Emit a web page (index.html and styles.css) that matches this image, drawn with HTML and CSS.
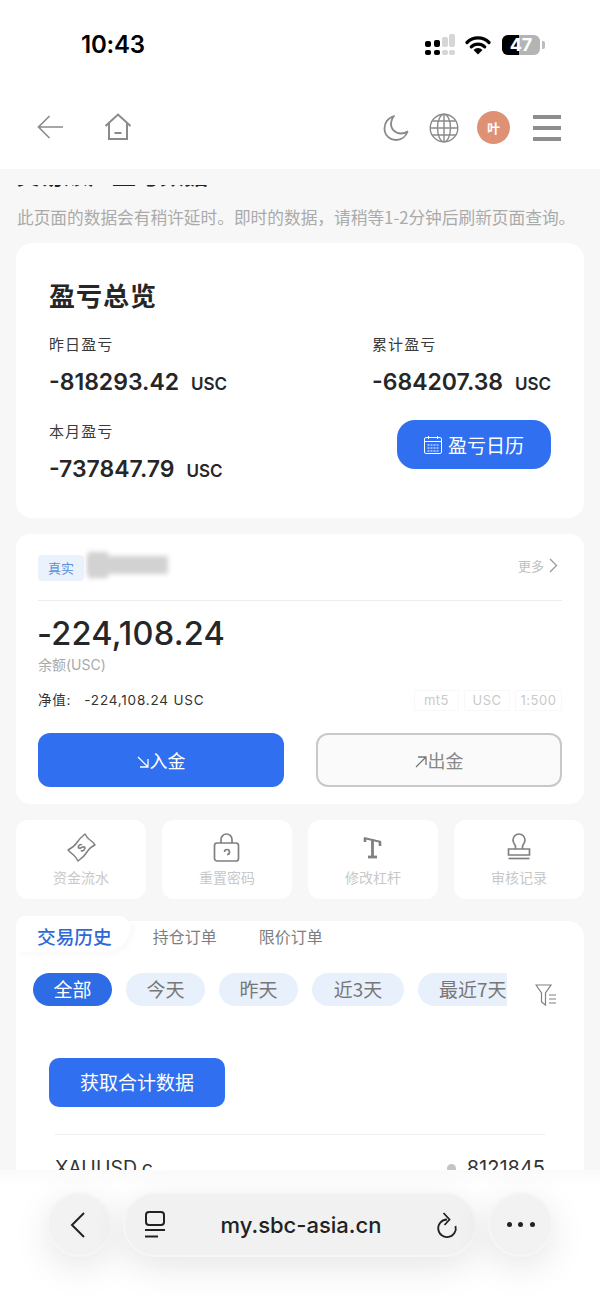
FILE: index.html
```html
<!DOCTYPE html>
<html lang="zh-CN">
<head>
<meta charset="utf-8">
<title>盈亏总览</title>
<link rel="stylesheet" href="styles.css">
</head>
<body>
<div class="phone">
  <header class="top">
    <div class="status">
      <span class="clock">10:43</span>
      <div class="status-icons">
        <svg class="signal" width="30" height="21" viewBox="0 0 30 21"><g fill="#000"><rect x="0" y="7" width="6" height="6" rx="2"/><rect x="0" y="16" width="6" height="5" rx="2"/><rect x="9" y="6" width="6" height="7" rx="2"/><rect x="9" y="16" width="6" height="5" rx="2"/></g><g fill="#d6d6d6"><rect x="17" y="3" width="6" height="10" rx="2"/><rect x="17" y="16" width="6" height="5" rx="2"/><rect x="24" y="0" width="6" height="13" rx="2"/><rect x="24" y="16" width="6" height="5" rx="2"/></g></svg>
        <svg class="wifi" width="26" height="20" viewBox="0 0 26 20"><path d="M2 7.500a15.500 15.500 0 0 1 22 0M6.300 11.800a9.500 9.500 0 0 1 13.400 0" fill="none" stroke="#000" stroke-width="3.200" stroke-linecap="round"/><path d="M13 19.500l-4.500-4.500a6.300 6.300 0 0 1 9 0z" fill="#000"/></svg>
        <div class="battery"><div class="battery-fill"></div><span class="battery-num">47</span></div>
        <i class="battery-cap"></i>
      </div>
    </div>
    <nav class="nav">
      <div class="nav-left">
        <svg width="26" height="26" viewBox="0 0 26 26"><path d="M12.500 2 1.500 13l11 11M1.500 13H26" fill="none" stroke="#8a8a8a" stroke-width="1.600"/></svg>
        <svg width="28" height="28" viewBox="0 0 28 28"><path d="M1.500 13 14 1.500 26.500 13M5 10.500V26h18V10.500M10.500 20h7" fill="none" stroke="#8a8a8a" stroke-width="2"/></svg>
      </div>
      <div class="nav-right">
        <svg class="moon" width="26" height="28" viewBox="0 0 26 28"><path d="M11 2C4 4 1.500 10 1.500 14.500 1.500 21 6.500 26 13 26c5.500 0 10-3.500 11.500-8.500-2 1.500-4.500 2-6.500 2C12 19.500 7.500 14.500 8 9c.2-2.500 1.200-5 3-7z" fill="none" stroke="#8a8a8a" stroke-width="1.800" stroke-linejoin="round"/></svg>
        <svg class="globe" width="30" height="30" viewBox="0 0 30 30"><g fill="none" stroke="#8a8a8a" stroke-width="1.400"><circle cx="15" cy="15" r="13.800"/><ellipse cx="15" cy="15" rx="6.500" ry="13.800"/><path d="M15 1.500v27M1.500 15h27M3.500 8h23M3.500 22h23"/></g></svg>
        <span class="avatar">叶</span>
        <div class="burger"><i></i><i></i><i></i></div>
      </div>
    </nav>
  </header>

  <main class="content">
    <div class="title-clip"><h1 class="page-title">交易账户盈亏数据</h1></div>
    <p class="notice">此页面的数据会有稍许延时。即时的数据，请稍等1-2分钟后刷新页面查询。</p>

    <section class="card summary">
      <h2 class="summary-title">盈亏总览</h2>
      <div class="summary-grid">
        <div class="stat">
          <div class="stat-label">昨日盈亏</div>
          <div class="stat-value">-818293.42<small>USC</small></div>
        </div>
        <div class="stat">
          <div class="stat-label">累计盈亏</div>
          <div class="stat-value">-684207.38<small>USC</small></div>
        </div>
        <div class="stat">
          <div class="stat-label">本月盈亏</div>
          <div class="stat-value">-737847.79<small>USC</small></div>
        </div>
        <div class="calendar-btn">
          <svg width="18" height="18" viewBox="0 0 18 18"><g fill="none" stroke="#fff" stroke-width="1"><rect x=".5" y="1.500" width="17" height="16" rx="1.500"/><path d="M.5 5.500h17M4.500 0v3M13.500 0v3"/><path d="M3.500 9h11M3.500 12h11M3.500 15h11" stroke-dasharray="2 1"/></g></svg>
          <span>盈亏日历</span>
        </div>
      </div>
    </section>

    <section class="card account">
      <div class="account-head">
        <div class="account-id">
          <span class="tag">真实</span>
          <div class="blur-name"><i class="blur-a"></i><i class="blur-b"></i></div>
        </div>
        <div class="more">更多
          <svg width="9" height="15" viewBox="0 0 9 15"><path d="M1 1l6.500 6.500L1 14" fill="none" stroke="#999" stroke-width="1.300"/></svg>
        </div>
      </div>
      <div class="balance">-224,108.24</div>
      <div class="balance-label">余额(USC)</div>
      <div class="equity-row">
        <div class="equity"><span class="equity-key">净值:</span>-224,108.24 USC</div>
        <div class="chips"><span class="chip chip-mt">mt5</span><span class="chip chip-cur">USC</span><span class="chip chip-lev">1:500</span></div>
      </div>
      <div class="actions">
        <div class="btn-deposit"><svg width="12" height="12" viewBox="0 0 12 12"><path d="M1 1l10 10M11 3v8H3" fill="none" stroke="#fff" stroke-width="1.300"/></svg>入金</div>
        <div class="btn-withdraw"><svg width="12" height="12" viewBox="0 0 12 12"><path d="M1 11 11 1M3 1h8v8" fill="none" stroke="#777" stroke-width="1.300"/></svg>出金</div>
      </div>
    </section>

    <section class="shortcuts">
      <div class="shortcut">
        <svg width="32" height="32" viewBox="0 0 32 32"><g fill="none" stroke="#808080" stroke-width="1.500" stroke-linejoin="round"><path d="M3 18Q9 15 12 10.500T20 2Q22 6 25 8T30 13Q25 15 22 20T13 29Q11 25 8.500 23T3 18z"/></g><text class="dollar" x="16.500" y="19.500" text-anchor="middle" transform="rotate(-45 16.500 15.500)">S</text></svg>
        <span>资金流水</span>
      </div>
      <div class="shortcut">
        <svg width="32" height="32" viewBox="0 0 32 32"><g fill="none" stroke="#808080" stroke-width="1.700"><rect x="3.500" y="11" width="24" height="18" rx="2.500"/><path d="M10 11V7.500a5.500 5.500 0 0 1 11 0V11"/><path d="M13.500 20a2.500 2.500 0 1 1 2.500 2.500"/></g></svg>
        <span>重置密码</span>
      </div>
      <div class="shortcut">
        <svg width="32" height="32" viewBox="0 0 32 32"><g fill="none" stroke="#808080"><path d="M7 6l17 4" stroke-width="1.800"/><path d="M15.500 7v17" stroke-width="2.800"/><path d="M11 25h9" stroke-width="2.800"/><path d="M8 6v4M23 10v4" stroke-width="2.600"/></g></svg>
        <span>修改杠杆</span>
      </div>
      <div class="shortcut">
        <svg width="32" height="32" viewBox="0 0 32 32"><g fill="none" stroke="#808080" stroke-width="1.700"><path d="M12.500 17v-2.500c0-2-2.500-2.800-2.500-6.500a6 6 0 0 1 12 0c0 3.700-2.500 4.500-2.500 6.500V17"/><path d="M5.500 23v-6h21v6z"/><path d="M5.500 26.500h21"/></g></svg>
        <span>审核记录</span>
      </div>
    </section>

    <section class="card orders">
      <div class="tabs">
        <span class="tab tab-active">交易历史</span>
        <span class="tab tab-hold">持仓订单</span>
        <span class="tab tab-limit">限价订单</span>
      </div>
      <div class="filters">
        <div class="pills">
          <span class="pill pill-on">全部</span>
          <span class="pill">今天</span>
          <span class="pill">昨天</span>
          <span class="pill pill-3">近3天</span>
          <span class="pill pill-7">最近7天</span>
        </div>
        <svg class="filter-icon" width="22" height="23" viewBox="0 0 22 23"><path d="M1 1h15l-5.500 8v12l-4-3V9z M14 11h7M14 15h7M14 19h7" fill="none" stroke="#808080" stroke-width="1.200"/></svg>
      </div>
      <div class="fetch-btn">获取合计数据</div>
      <div class="order-row">
        <span class="symbol">XAUUSD.c</span>
        <span class="ticket"><i></i>8121845</span>
      </div>
    </section>
  </main>

  <footer class="browser">
    <div class="round-btn">
      <svg class="back-chevron" width="16" height="28" viewBox="0 0 16 28"><path d="M14 2 2 14l12 12" fill="none" stroke="#222" stroke-width="2"/></svg>
    </div>
    <div class="url-bar">
      <svg width="22" height="27" viewBox="0 0 22 27"><g fill="none" stroke="#222" stroke-width="2"><rect x="2" y="1" width="18" height="13" rx="3"/><path d="M1 19h20"/><path d="M1 25.500h13"/></g></svg>
      <span class="url">my.sbc-asia.cn</span>
      <svg width="22" height="28" viewBox="0 0 22 28"><g fill="none" stroke="#222" stroke-width="1.800"><path d="M11 8.500A8.800 8.800 0 1 0 19.500 15"/><path d="M7.500 2l6 6.500-5 5.500"/></g></svg>
    </div>
    <div class="round-btn">
      <div class="dots"><i></i><i></i><i></i></div>
    </div>
  </footer>
</div>
</body>
</html>
```

FILE: styles.css
```css
* { box-sizing: border-box; }
html, body { margin: 0; padding: 0; }
body {
  width: 600px;
  height: 1304px;
  overflow: hidden;
  font-family: "Inter", "Noto Sans CJK SC", sans-serif;
  color: #262626;
  background: #fff;
}
.phone { width: 600px; height: 1304px; display: flex; flex-direction: column; overflow: hidden; }

.top { height: 169px; flex: none; background: #fff; }
.status { height: 86px; display: flex; justify-content: space-between; align-items: center; padding: 3px 55px 0 81px; }
.clock { font: 600 24px/30px "Inter", sans-serif; color: #000; letter-spacing: -0.2px; }
.status-icons { display: flex; align-items: center; }
.signal { margin-right: 10px; }
.wifi { margin-right: 11px; }
.battery { position: relative; width: 38px; height: 20px; border-radius: 6px; background: #b4b4b4; overflow: hidden; }
.battery-fill { width: 17px; height: 20px; background: #000; }
.battery-num { position: absolute; inset: 0; text-align: center; font: 700 18px/20px "Inter", sans-serif; color: #fff; }
.battery-cap { width: 3px; height: 8px; margin-left: 2px; border-radius: 0 2px 2px 0; background: #bcbcbc; }

.nav { height: 83px; display: flex; justify-content: space-between; align-items: flex-start; padding: 25px 39px 0 37px; }
.nav-left { display: flex; align-items: center; gap: 41px; padding-top: 2px; }
.nav-right { display: flex; align-items: center; }
.moon { margin-right: 20px; }
.globe { margin-right: 18px; }
.avatar { width: 33px; height: 33px; border-radius: 50%; background: #df9176; color: #fff; font: 700 13px/33px "Noto Sans CJK SC", sans-serif; text-align: center; margin-right: 23px; }
.burger { width: 28px; display: flex; flex-direction: column; gap: 7px; }
.burger i { display: block; height: 4px; background: #8d8d8d; }

.content { flex: 1; min-height: 0; background: #f7f7f7; padding: 0 16px; overflow: hidden; }
.title-clip { height: 3px; margin-top: 16px; overflow: hidden; }
.page-title { margin: -26px 0 0; font: 700 24px/30px "Noto Sans CJK SC", sans-serif; color: #222; white-space: nowrap; }
.notice { margin: 19px 0 16px 1px; font: 400 16.700px/20px "Noto Sans CJK SC", sans-serif; color: #aaa; white-space: nowrap; }

.card { background: #fff; border-radius: 16px; }
.summary { height: 275px; padding: 33px 33px 0; margin-bottom: 16px; }
.summary-title { margin: 0 0 19px; font: 700 26px/38px "Noto Sans CJK SC", sans-serif; color: #262626; letter-spacing: 1px; }
.summary-grid { display: grid; grid-template-columns: 323px 1fr; row-gap: 23px; }
.stat-label { font: 400 15px/22px "Noto Sans CJK SC", sans-serif; color: #3a3a3a; letter-spacing: 1.100px; }
.stat-value { margin-top: 14px; font: 600 23px/26px "Inter", sans-serif; color: #262626; white-space: nowrap; }
.stat-value small { margin-left: 12px; font: 600 17px/26px "Inter", sans-serif; }
.calendar-btn { justify-self: end; width: 154px; height: 49px; border-radius: 18px; background: #2f6ff0; color: #fff; display: flex; align-items: center; justify-content: center; gap: 6px; font: 400 19px/24px "Noto Sans CJK SC", sans-serif; }

.account { height: 270px; padding: 0 22px; margin-bottom: 16px; border-radius: 14px; }
.account-head { height: 67px; display: flex; justify-content: space-between; align-items: flex-start; padding-top: 21px; border-bottom: 1px solid #ececec; }
.account-id { display: flex; }
.tag { width: 46px; height: 26px; border-radius: 4px; background: #eaf2fc; color: #5b8fdc; font: 400 13px/25px "Noto Sans CJK SC", sans-serif; text-align: center; }
.blur-name { position: relative; width: 86px; height: 26px; margin-top: -3px; }
.blur-name i { position: absolute; background: #d2d2d2; filter: blur(2.500px); }
.blur-a { left: 4px; top: 0; width: 20px; height: 26px; }
.blur-b { left: 4px; top: 4px; width: 80px; height: 18px; }
.more { display: flex; align-items: flex-start; gap: 5px; padding: 2px 4px 0 0; font: 400 13px/18px "Noto Sans CJK SC", sans-serif; color: #c0c0c0; }
.more svg { margin-top: 1px; }
.balance { margin: 12px 0 0 -1px; font: 500 32.500px/42px "Inter", sans-serif; color: #262626; letter-spacing: .2px; }
.balance-label { margin-top: 1px; font: 400 14px/18px "Inter", "Noto Sans CJK SC", sans-serif; color: #aaa; }
.equity-row { display: flex; justify-content: space-between; align-items: center; margin-top: 15px; height: 22px; }
.equity { font: 400 13.500px/22px "Inter", "Noto Sans CJK SC", sans-serif; color: #333; letter-spacing: .8px; }
.equity-key { margin-right: 13px; }
.chips { display: flex; gap: 5px; }
.chip { height: 21px; border: 1px solid #f8f8f8; color: #cacaca; font: 400 13px/19px "Inter", sans-serif; text-align: center; letter-spacing: .5px; }
.chip-mt { width: 45px; }
.chip-cur { width: 46px; }
.chip-lev { width: 47px; }
.actions { display: flex; justify-content: space-between; margin-top: 22px; }
.btn-deposit, .btn-withdraw { width: 246px; height: 54px; border-radius: 12px; display: flex; align-items: center; justify-content: center; gap: 1px; font: 400 18px/24px "Noto Sans CJK SC", sans-serif; }
.btn-deposit { background: #2f6ff0; color: #fff; }
.btn-withdraw { background: #fafafa; border: 2px solid #c8c8c8; color: #888; }
.btn-deposit svg, .btn-withdraw svg { margin-top: 4px; }

.shortcuts { display: flex; justify-content: space-between; margin-bottom: 22px; }
.shortcut { width: 130px; height: 79px; background: #fff; border-radius: 12px; display: flex; flex-direction: column; align-items: center; padding-top: 12px; gap: 4px; font: 400 14px/18px "Noto Sans CJK SC", sans-serif; color: #c8c8c8; }
.shortcut svg { flex: none; }
.dollar { font: 700 11px "Inter", sans-serif; fill: #808080; }

.orders { height: 400px; position: relative; padding: 0; }
.tabs { height: 30px; display: flex; align-items: center; }
.tab { font: 400 16px/30px "Noto Sans CJK SC", sans-serif; color: #7e7e7e; }
.tab-active { position: relative; z-index: 0; font-size: 18.700px; font-weight: 500; color: #2e69d6; margin-left: 21px; }
.tab-active::after { content: ""; position: absolute; left: -21px; right: -18px; top: -5px; height: 36px; border-radius: 14px 18px 40px 0; background: #fff; box-shadow: 4px 3px 6px rgba(0,0,0,.025); z-index: -1; }
.tab-hold { margin-left: 41px; }
.tab-limit { margin-left: 42px; }
.filters { display: flex; align-items: flex-start; margin-top: 22px; padding-left: 17px; }
.pills { width: 474px; display: flex; gap: 14px; overflow: hidden; }
.pill { flex: none; width: 79px; height: 33px; border-radius: 17px; background: #e8f0fb; color: #777; font: 400 19px/31px "Noto Sans CJK SC", sans-serif; text-align: center; }
.pill-on { background: #2e6ce6; color: #fff; }
.pill-3 { width: 92px; }
.pill-7 { width: 110px; padding-left: 21px; text-align: left; white-space: nowrap; }
.filter-icon { margin: 11px 0 0 28px; }
.fetch-btn { width: 176px; height: 49px; margin: 51px 0 0 33px; border-radius: 10px; background: #2f6ff0; color: #fff; font: 400 19px/47px "Noto Sans CJK SC", sans-serif; text-align: center; }
.order-row { display: flex; justify-content: space-between; margin: 27px 39px 0; padding-top: 16px; border-top: 1px solid #efefef; font: 400 19.500px/34px "Inter", sans-serif; color: #333; }
.ticket { display: flex; align-items: center; height: 34px; font-size: 20px; }
.ticket i { width: 9px; height: 9px; border-radius: 50%; background: #c4c4c4; margin-right: 11px; }

.browser { height: 134px; flex: none; background: linear-gradient(#fafafa, #fff 12%); display: flex; align-items: flex-start; gap: 11px; padding: 22px 0 0 47px; position: relative; }
.round-btn { width: 65px; height: 65px; border-radius: 50%; background: #f2f2f2; border: 2px solid #f6f6f6; box-shadow: 0 10px 36px rgba(0,0,0,.1); display: flex; align-items: center; justify-content: center; }
.back-chevron { margin-right: 3px; }
.url-bar { width: 354px; height: 65px; border-radius: 33px; background: #f1f1f1; border: 2px solid #f6f6f6; box-shadow: 0 10px 36px rgba(0,0,0,.1); display: flex; align-items: center; justify-content: space-between; padding: 0 17px 0 19px; }
.url { font: 500 22px/28px "Inter", sans-serif; color: #222; }
.dots { display: flex; gap: 6.500px; }
.dots i { width: 5px; height: 5px; border-radius: 50%; background: #222; }
```
